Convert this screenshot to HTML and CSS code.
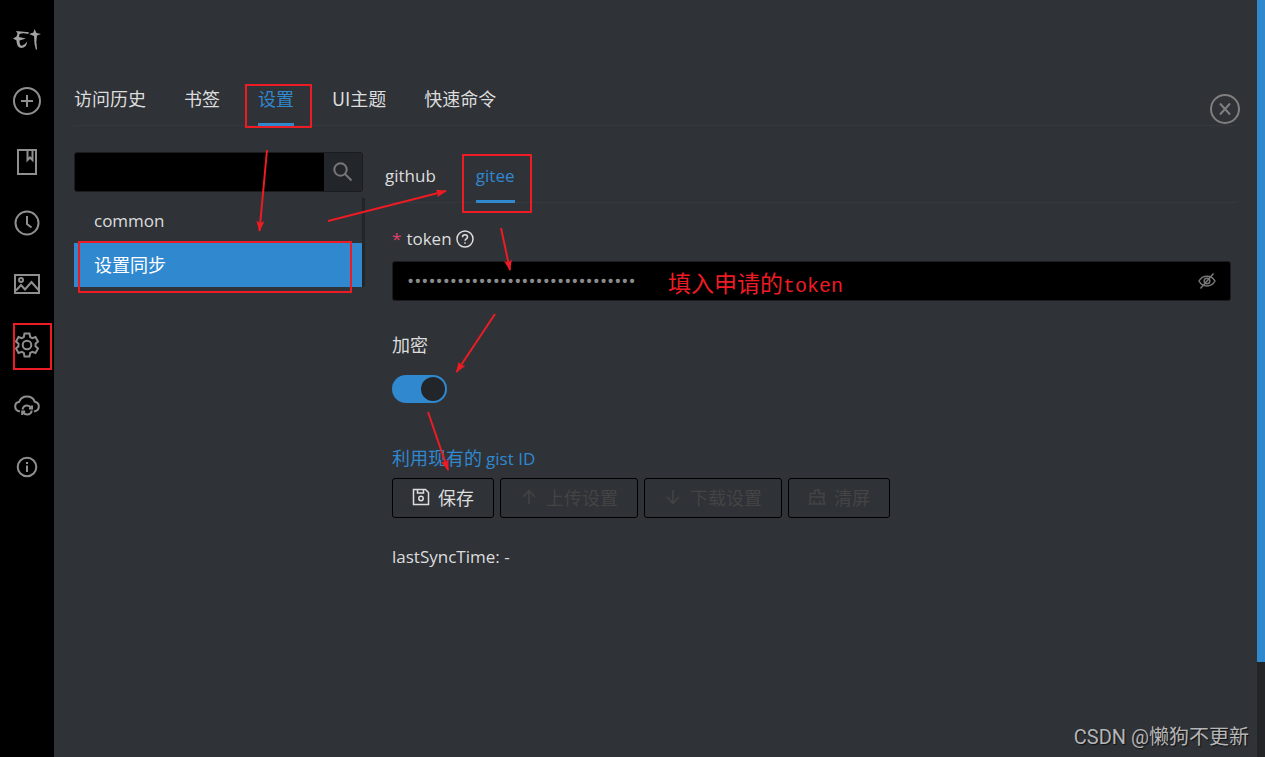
FILE: index.html
```html
<!DOCTYPE html>
<html lang="zh-CN">
<head>
<meta charset="utf-8">
<title>设置同步</title>
<link rel="stylesheet" href="styles.css">
</head>
<body>
<div class="app">
  <nav class="sidebar" aria-label="主菜单">
    <a class="side-item side-logo" href="#" aria-label="首页">
      <svg width="28" height="22" viewBox="0 0 28 22"><path d="M3 2 16 3.200 15 5Q10 3.500 6.500 5L6 8 13 9.500 6.500 11.500Q6.500 17 9 16.800 12 16 14 12.500 14 19 8 19 3.500 18 3.500 11.500L0 9.500 3.500 7.500 4.500 4.500Z"/><path d="M21.500 0 23.500 4 28 5 24 6.500Q22.800 12 24 20L23 21Q21 15 21 7L16 5 20.500 3.500Z"/></svg>
    </a>
    <button class="side-item" aria-label="新建"><svg width="28" height="28" viewBox="0 0 28 28"><circle cx="14" cy="14" r="13"/><path d="M14 8v12M8 14h12"/></svg></button>
    <button class="side-item" aria-label="书签"><svg width="20" height="26" viewBox="0 0 20 26"><path d="M1 1h18v24H1zM10.500 1v10l2.500-2.500 2.500 2.500V1"/></svg></button>
    <button class="side-item" aria-label="历史"><svg width="26" height="26" viewBox="0 0 26 26"><circle cx="13" cy="13" r="11.500"/><path d="M13 6v8l4.500 3.500"/></svg></button>
    <button class="side-item" aria-label="主题"><svg width="26" height="20" viewBox="0 0 26 20"><path d="M1 1h24v18H1zM2 16.500l5-5.500 4 4.500 6.500-7.500 7 8"/><circle cx="7" cy="6" r="2"/></svg></button>
    <button class="side-item" aria-label="设置"><svg width="26" height="26" viewBox="-13 -13 26 26"><path d="M-2.500-11.500h5L3.200-8 5.330-6.770 8.500-8 11-3.500 8.530-1.230V1.230L11 3.500 8.500 8 5.330 6.770 3.200 8 2.500 11.500h-5L-3.200 8-5.330 6.770-8.500 8-11 3.500-8.530 1.230V-1.230L-11-3.500-8.500-8-5.330-6.770-3.200-8Z"/><circle r="4.300"/></svg></button>
    <button class="side-item" aria-label="同步"><svg width="26" height="22" viewBox="0 0 26 22"><path d="M6 16.500C3 16 1.200 14 1.200 11.500 1.200 9 3 7.200 5.200 6.800 6.500 3.200 9.500 1.500 13 1.500s6.500 1.700 7.800 5.300c2.200.4 4 2.200 4 4.700 0 2.500-1.800 4.500-4.800 5"/><path d="M8.500 14.500c.5-2.500 2.500-4 4.500-4 1.800 0 3.200.8 4.200 2.300M18 10.500v3h-3M17.800 15.500c-.5 2.500-2.500 4-4.600 4-1.800 0-3.400-.9-4.400-2.500M8.200 20v-3.500h3"/></svg></button>
    <button class="side-item" aria-label="关于"><svg width="22" height="22" viewBox="0 0 22 22"><circle cx="11" cy="11" r="9.300"/><path d="M11 9.500V16M11 6v2"/></svg></button>
  </nav>

  <main class="main">
    <nav class="tabs top-tabs" aria-label="分类">
      <a class="tab" href="#">访问历史</a>
      <a class="tab" href="#">书签</a>
      <a class="tab active" href="#">设置</a>
      <a class="tab" href="#">UI主题</a>
      <a class="tab" href="#">快速命令</a>
    </nav>
    <button class="close" aria-label="关闭"><svg width="32" height="32" viewBox="0 0 32 32"><circle cx="16" cy="16" r="14"/><path d="M11 10.500l10 11M21 10.500l-10 11"/></svg></button>

    <div class="columns">
      <section class="side-panel">
        <form class="search">
          <input class="search-input" type="text" aria-label="搜索">
          <button class="search-button" type="button" aria-label="搜索"><svg width="20" height="20" viewBox="0 0 20 20"><circle cx="7.500" cy="7.500" r="6.200"/><path d="M12 12l6.500 6.500"/></svg></button>
        </form>
        <div class="list">
          <a class="list-item latin" href="#">common</a>
          <a class="list-item selected" href="#">设置同步</a>
        </div>
      </section>

      <section class="content">
        <nav class="tabs sub-tabs latin" aria-label="同步方式">
          <a class="tab" href="#">github</a>
          <a class="tab active" href="#">gitee</a>
        </nav>
        <form class="form">
          <label class="label latin" for="token"><span class="required">*</span>token<svg width="18" height="18" viewBox="0 0 18 18"><circle cx="9" cy="9" r="8"/><path d="M6.500 7.200c0-3.200 5-3.200 5 0 0 1.700-2.500 1.800-2.500 3.600M9 12.200v1.500"/></svg></label>
          <div class="token-box">
            <input class="token-input" id="token" type="password" value="0123456789abcdef0123456789abcdef">
            <button class="eye" type="button" aria-label="显示"><svg width="18" height="18" viewBox="0 0 18 18"><path d="M1 9c3.500-6.500 12.500-6.500 16 0-3.500 6.500-12.500 6.500-16 0zM15.500 1.500l-13 15"/><circle cx="9" cy="9" r="2.800"/></svg></button>
          </div>
          <label class="label encrypt-label" for="encrypt">加密</label>
          <input class="switch" id="encrypt" type="checkbox" checked>
          <a class="gist-link" href="#">利用现有的 <span class="latin">gist ID</span></a>
          <div class="actions">
            <button class="action" type="button"><svg width="18" height="18" viewBox="0 0 18 18"><path d="M1.500 1.500h12l3 3v12h-15zM5.500 1.500V5h6V1.500"/><circle cx="9" cy="10.500" r="2.200"/></svg>保存</button>
            <button class="action" type="button" disabled><svg width="18" height="18" viewBox="0 0 18 18"><path d="M9 16V2.500M3 9l6-6.500L15 9"/></svg>上传设置</button>
            <button class="action" type="button" disabled><svg width="18" height="18" viewBox="0 0 18 18"><path d="M9 2v13.500M3 9l6 6.500L15 9"/></svg>下载设置</button>
            <button class="action" type="button" disabled><svg width="18" height="18" viewBox="0 0 18 18"><path d="M2 9V5.500h5V2h4v3.500h5V9zM2.800 9L1.500 16h15L15.200 9M6 12.500V16M12 12.500V16"/></svg>清屏</button>
          </div>
          <p class="sync-time latin">lastSyncTime: -</p>
        </form>
      </section>
    </div>
  </main>
  <div class="scrollbar"><div class="thumb"></div></div>

  <svg class="marks" width="1265" height="757" viewBox="0 0 1265 757">
    <defs><marker id="head" markerUnits="userSpaceOnUse" markerWidth="12" markerHeight="8" refX="10" refY="4" orient="auto"><path class="head" d="M0 0L11 4 0 8 2 4Z"/></marker></defs>
    <rect x="246" y="85" width="65" height="42"/>
    <rect x="14" y="324" width="37" height="45"/>
    <rect x="79" y="242" width="272" height="50"/>
    <rect x="463" y="155" width="68" height="57"/>
    <g marker-end="url(#head)">
      <path d="M267 150L259.500 231"/>
      <path d="M328 221L446 191"/>
      <path d="M501 228L510 270"/>
      <path d="M495 314L456.500 372"/>
      <path d="M428 412L448 470"/>
    </g>
  </svg>
  <div class="note">填入申请的<span class="note-latin">token</span></div>
  <div class="watermark">CSDN @懒狗不更新</div>
</div>
</body>
</html>
```

FILE: styles.css
```css
* { box-sizing: border-box; }

body {
  margin: 0;
  background: #2f3237;
  color: #dddddd;
  font: 18px/24px "Noto Sans CJK SC", sans-serif;
}

a { color: inherit; text-decoration: none; }

button {
  margin: 0;
  padding: 0;
  border: 0;
  background: none;
  color: inherit;
  font: inherit;
}

svg { display: block; fill: none; stroke: currentColor; stroke-width: 2; }

.latin { font-family: "Open Sans", "Noto Sans CJK SC", sans-serif; font-size: 17px; }

.app { position: relative; display: flex; min-height: 100vh; overflow: hidden; }

.sidebar {
  flex: none;
  display: flex;
  flex-direction: column;
  width: 54px;
  padding-top: 9px;
  background: #000000;
  color: #8f8f8f;
}

.side-item { display: flex; align-items: center; justify-content: center; height: 61px; }
.side-logo svg { fill: #a3a3a3; stroke: none; }

.main { position: relative; flex: 1; min-width: 0; padding: 72px 20px 0; }

.tabs { display: flex; border-bottom: 1px solid #35383d; }
.tab { border-bottom: 3px solid transparent; }
.tab.active { border-color: #3088cf; color: #3088cf; }
.top-tabs { gap: 38px; }
.top-tabs .tab { height: 54px; padding-top: 14px; margin-bottom: -1px; }

.close { position: absolute; top: 93px; right: 16px; color: #7f7f7f; }

.columns { display: flex; gap: 22px; padding-top: 26px; }

.side-panel { flex: none; width: 289px; }

.search { display: flex; height: 40px; border: 1px solid #1b1c1f; border-radius: 3px; background: #000000; }
.search-input { flex: 1; min-width: 0; border: 0; background: transparent; color: inherit; }
.search-button {
  display: flex;
  align-items: center;
  justify-content: center;
  width: 39px;
  border-left: 1px solid #000000;
  background: #22262b;
  color: #777777;
}

.list { margin-top: 6px; margin-right: -2px; padding-top: 1px; border-right: 3px solid #232529; }
.list-item { display: block; height: 44px; padding: 10px 20px; }
.list-item.selected { padding-top: 9px; background: #3088cf; color: #ffffff; }

.content { flex: 1; min-width: 0; }
.sub-tabs { gap: 40px; }
.sub-tabs .tab { height: 51px; padding-top: 12px; margin-bottom: -1px; }

.form { display: flex; flex-direction: column; align-items: flex-start; padding: 24px 6px 0 7px; }
.label { display: flex; align-items: center; height: 24px; }
.label svg { margin-left: 4px; stroke-width: 1.5; }
.required { margin-right: 5px; color: #e0436a; }

.token-box {
  display: flex;
  align-items: center;
  width: 100%;
  height: 40px;
  margin-top: 10px;
  padding: 0 14px;
  border: 1px solid #1b1c1f;
  border-radius: 3px;
  background: #000000;
}
.token-input {
  flex: 1;
  min-width: 0;
  padding: 0;
  border: 0;
  outline: 0;
  background: transparent;
  color: #8c8c8c;
  font: 19px "Open Sans", sans-serif;
}
.eye { color: #777777; }
.eye svg { stroke-width: 1.5; }

.encrypt-label { margin-top: 31px; }

.switch {
  appearance: none;
  display: flex;
  justify-content: flex-end;
  width: 55px;
  height: 28px;
  margin: 19px 0 0;
  padding: 2px;
  border-radius: 14px;
  background: #3088cf;
}
.switch::before { content: ""; width: 24px; height: 24px; border-radius: 50%; background: #22262b; }

.gist-link { margin-top: 42px; color: #3088cf; }

.actions { display: flex; gap: 6px; margin-top: 7px; }
.action {
  display: flex;
  align-items: center;
  gap: 8px;
  height: 40px;
  padding: 0 19px 2px;
  border: 1px solid #000000;
  border-radius: 3px;
}
.action svg { stroke-width: 1.5; }
.action:disabled { color: #444444; }

.sync-time { margin: 27px 0 0; }

.scrollbar { flex: none; width: 8px; background: #232428; }
.thumb { height: 662px; background: #3088cf; }

.marks { position: absolute; top: 0; left: 0; stroke: #ed1c24; pointer-events: none; }
.head { fill: #ed1c24; stroke: none; }

.note { position: absolute; top: 267px; left: 668px; color: #ed1c24; font-size: 23px; line-height: 30px; }
.note-latin { font-family: "Liberation Mono", monospace; font-size: 20px; }

.watermark {
  position: absolute;
  right: 16px;
  bottom: 6px;
  color: #b5b6b8;
  font: 20px/28px Roboto, "Noto Sans CJK SC", sans-serif;
  text-shadow: 1px 1px 1px #111111;
}
```
